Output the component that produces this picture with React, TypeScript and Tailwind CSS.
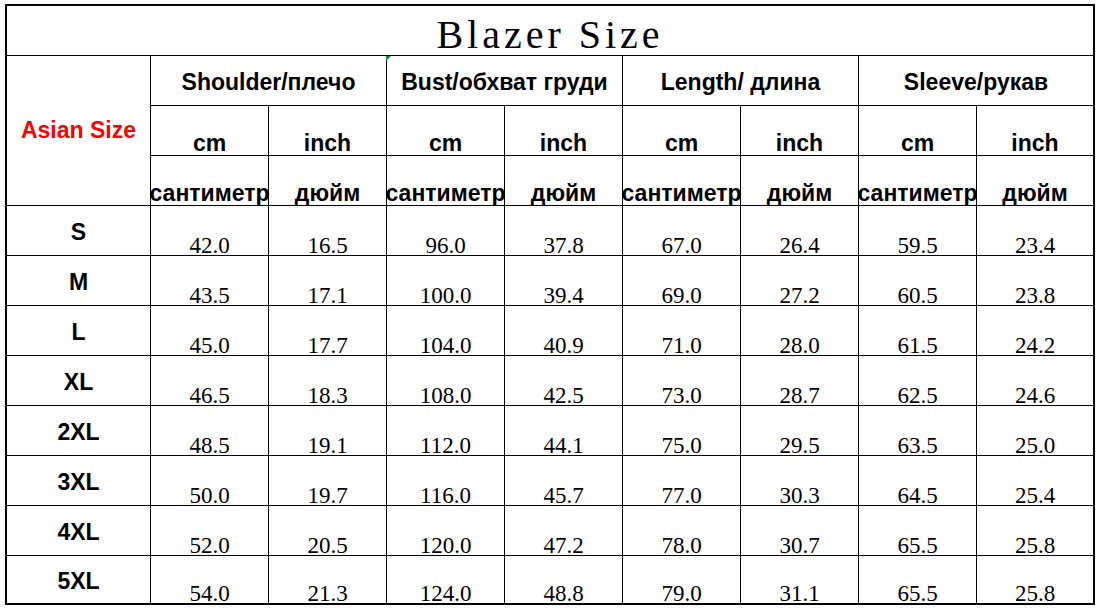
const rows: [string, string[]][] = [
  ['S', ['42.0', '16.5', '96.0', '37.8', '67.0', '26.4', '59.5', '23.4']],
  ['M', ['43.5', '17.1', '100.0', '39.4', '69.0', '27.2', '60.5', '23.8']],
  ['L', ['45.0', '17.7', '104.0', '40.9', '71.0', '28.0', '61.5', '24.2']],
  ['XL', ['46.5', '18.3', '108.0', '42.5', '73.0', '28.7', '62.5', '24.6']],
  ['2XL', ['48.5', '19.1', '112.0', '44.1', '75.0', '29.5', '63.5', '25.0']],
  ['3XL', ['50.0', '19.7', '116.0', '45.7', '77.0', '30.3', '64.5', '25.4']],
  ['4XL', ['52.0', '20.5', '120.0', '47.2', '78.0', '30.7', '65.5', '25.8']],
  ['5XL', ['54.0', '21.3', '124.0', '48.8', '79.0', '31.1', '65.5', '25.8']],
];

const groups = ['Shoulder/плечо', 'Bust/обхват груди', 'Length/ длина', 'Sleeve/рукав'];

const sans = "font-['Liberation_Sans',Arial,sans-serif]";
const serif = "font-['Liberation_Serif','Times_New_Roman',serif]";

export default function App() {
  return (
    <div className="h-[612px] w-[1104px] bg-white pl-[5px] pt-[4px] text-black">
      <div className="grid h-[601px] w-[1090px] grid-cols-[144px_repeat(7,118px)_1fr] grid-rows-[repeat(11,50px)_1fr] border-2 border-black">
        <div
          className={`col-span-9 flex items-end justify-center border-b border-black text-[40px] leading-[40px] tracking-[4px] ${serif}`}
        >
          Blazer Size
        </div>

        <div
          className={`row-span-3 flex items-center justify-center border-r border-b border-black text-[23px] font-bold text-[#ff0000] ${sans}`}
        >
          Asian Size
        </div>
        {groups.map((g, i) => (
          <div
            key={g}
            className={`relative col-span-2 flex items-center justify-center whitespace-nowrap border-b border-black pt-[4px] text-[23px] font-bold ${sans} ${
              i < 3 ? 'border-r' : ''
            }`}
          >
            {i === 1 && (
              <span className="absolute left-[-1px] top-0 h-0 w-0 border-t-[5px] border-r-[5px] border-t-[#1a8a2e] border-r-transparent" />
            )}
            {g}
          </div>
        ))}

        {[0, 1].map((r) =>
          Array.from({ length: 8 }).map((_, i) => (
            <div
              key={`h${r}-${i}`}
              className={`flex items-end justify-center whitespace-nowrap border-b border-black pb-[1px] text-[23px] font-bold leading-[22px] ${sans} ${
                i < 7 ? 'border-r' : ''
              }`}
            >
              {r === 0 ? (i % 2 === 0 ? 'cm' : 'inch') : i % 2 === 0 ? 'сантиметр' : 'дюйм'}
            </div>
          )),
        )}

        {rows.map(([label, vals], r) => {
          const last = r === rows.length - 1;
          return [
            <div
              key={`l${label}`}
              className={`flex items-center justify-center border-r border-black pt-[4px] text-[23px] font-bold ${sans} ${
                last ? '' : 'border-b'
              }`}
            >
              {label}
            </div>,
            ...vals.map((v, i) => (
              <div
                key={`${label}-${i}`}
                className={`flex items-end justify-center overflow-visible border-black text-[23px] leading-[18px] ${serif} ${
                  i < 7 ? 'border-r' : ''
                } ${last ? '' : 'border-b'}`}
              >
                {v}
              </div>
            )),
          ];
        })}
      </div>
    </div>
  );
}
